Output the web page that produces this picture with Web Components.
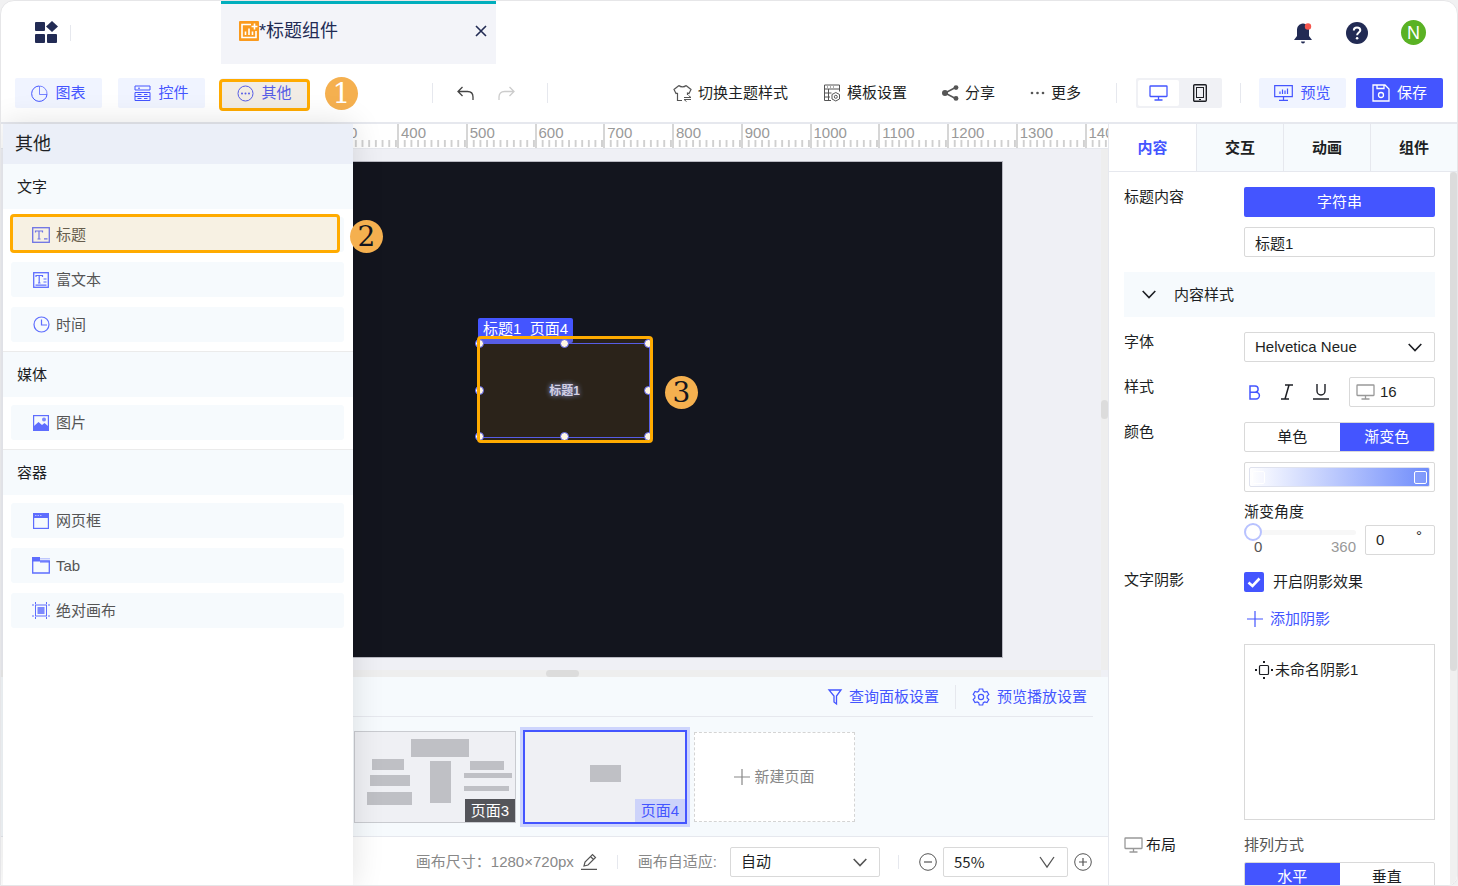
<!DOCTYPE html>
<html lang="zh-CN">
<head>
<meta charset="utf-8">
<meta name="viewport" content="width=device-width, initial-scale=1">
<title>标题组件</title>
<style>
  :root {
    --primary: #4455ff;
    --primary-soft: #f0f4ff;
    --tint: #f6fafd;
    --line: #e6e8ee;
    --field: #d9d9d9;
    --ink: #1d1f24;
    --muted: #888888;
    --mark: #ffab00;
  }
  body {
    margin: 0;
    background: #f1f1f2;
    color: var(--ink);
    font: 15px/20px "Liberation Sans", "Noto Sans CJK SC", sans-serif;
  }
</style>
</head>
<body>
<editor-app></editor-app>

<script>
// width, height, markup; drawn with currentColor
const ICONS = {
  apps: [23, 23, '<g fill="currentColor" stroke="none"><rect y="1" width="10" height="9" rx="1"/><rect y="13" width="10" height="9" rx="1"/><rect x="12" y="13" width="10" height="9" rx="1"/><path d="M17 0l6 5.500-6 5.500-6-5.500z"/></g>'],
  report: [20, 20, '<rect width="20" height="20" rx="1" fill="#fa9a1e" stroke="none"/><path d="M12 3.500H3v13h14V10" stroke="#fff" stroke-width="1.600"/><path d="M6.500 14v-3.500M10 14V7.500M13.500 14v-3.500" stroke="#fff" stroke-width="1.600"/><path d="M15.500 2.500v6M12.500 5.500h6" stroke="#fff" stroke-width="1.600"/>'],
  close: [12, 12, '<path d="M1 1l10 10M11 1L1 11" stroke-width="1.600"/>'],
  bell: [20, 22, '<path d="M10 1.500c-4 .5-6 3-6 6.500v6l-3 4h18l-3-4V8c0-3.500-2-6-6-6.500z" fill="currentColor" stroke="none"/><path d="M8 19.500h4a2 2 0 0 1-4 0z" fill="currentColor" stroke="none"/><circle cx="15" cy="4.500" r="3.200" fill="#f5564e" stroke="none"/>'],
  help: [22, 22, '<circle cx="11" cy="11" r="11" fill="currentColor" stroke="none"/><path d="M7.800 8.600c0-2 1.400-3.200 3.200-3.200s3.300 1.100 3.300 2.900c0 2.200-3.200 2.400-3.200 4.900" stroke="#fff" stroke-width="2"/><circle cx="11.100" cy="16.300" r="1.300" fill="#fff" stroke="none"/>'],
  pie: [17, 17, '<path d="M8 1a7.700 7.700 0 1 0 8 8.500"/><path d="M8.500 1v8.500H16A7.700 7.700 0 0 0 8.500 1z" opacity=".7"/>'],
  widgets: [17, 17, '<path d="M1 5V1h15v4z"/><path d="M1 7.500v8h15v-8zM1 11.500h15"/><path d="M4 3.200h2M3.500 9.500h4M10 9.500h3.500M3.500 13.500h4M10 13.500h3.500"/>'],
  more: [17, 17, '<circle cx="8.500" cy="8.500" r="7.500"/><g fill="currentColor" stroke="none"><circle cx="5" cy="8.500" r="1"/><circle cx="8.500" cy="8.500" r="1"/><circle cx="12" cy="8.500" r="1"/></g>'],
  undo: [17, 15, '<path d="M5.500 1L1 5.500 5.500 10M1 5.500h9.500c3.500 0 5.500 2 5.500 5.500v3" stroke-width="1.300"/>'],
  redo: [17, 15, '<path d="M11.500 1L16 5.500 11.500 10M16 5.500H6.500C3 5.500 1 7.500 1 11v3" stroke-width="1.300"/>'],
  theme: [19, 18, '<path d="M4.500 9v7.500H9M6 1.500L1 5.500l2 4 1.500-.5M13 1.500l5 4-2 4-1.500-.5v2M6 1.500c1.500 1.800 5.500 1.800 7 0" stroke-width="1.200"/><path d="M11 13.500h7l-2.500-2M18 15.500h-7l2.500 2"/>'],
  template: [18, 18, '<path d="M16.500 7.500V1h-15v15.500H8M1.500 5h15M5.500 5v11.500M1.500 9h7M1.500 13H7M4 3h1M7 3h1M10 3h1"/><path d="M12.800 8.500l3.700 2v4.500l-3.700 2-3.800-2v-4.500z"/><circle cx="12.800" cy="12.800" r="1.500"/>'],
  share: [17, 16, '<path d="M13.500 2.500L3 8l10.500 5.500" stroke-width="1.500"/><g fill="currentColor" stroke="none"><circle cx="3" cy="8" r="3"/><circle cx="14" cy="2.600" r="2.400"/><circle cx="14" cy="13.400" r="2.400"/></g>'],
  dots: [15, 16, '<g fill="currentColor" stroke="none"><circle cx="2" cy="8" r="1.300"/><circle cx="7.500" cy="8" r="1.300"/><circle cx="13" cy="8" r="1.300"/></g>'],
  monitor: [19, 16, '<rect x="1" y="1" width="17" height="10.500" rx=".5" stroke-width="1.300"/><path d="M9.500 12v2.500M5.500 15h8" stroke-width="1.300"/>'],
  phone: [14, 18, '<rect x=".7" y=".7" width="12.600" height="16.600" rx="1" stroke-width="1.400"/><rect x="3.500" y="3.500" width="7" height="10"/><path d="M6 15.500h2"/>'],
  preview: [19, 16, '<path d="M18.300.700H.7v11h17.600zM9.500 12v3M5 15.300h9M6 9V6.500M8.500 9V4.500M11 9V5.500M13.500 9V3.500" stroke-width="1.200"/>'],
  save: [18, 18, '<path d="M1 1h12l4 4v12H1zM5 1v3.500h7V1" stroke-width="1.300"/><circle cx="9" cy="11" r="2.500" stroke-width="1.300"/>'],
  title: [18, 16, '<rect x=".7" y=".7" width="16.600" height="14.600" stroke-width="1.300"/><path d="M3.500 5.500V4h7v1.500M7 4v8M5.500 12h3M12 11.800h3.500" stroke-width="1.200"/>'],
  rich: [16, 16, '<rect x=".7" y=".7" width="14.600" height="14.600" stroke-width="1.300"/><path d="M3 5V3.500h6.500V5M6.200 3.500v7.500M5 11h2.500M10.500 7h3M10.500 10h3M2.500 13.200h11" stroke-width="1.200"/>'],
  clock: [17, 17, '<circle cx="8.500" cy="8.500" r="7.500" stroke-width="1.200"/><path d="M8.500 3.500V9H14" stroke-width="1.200"/>'],
  image: [16, 16, '<rect x=".6" y=".6" width="14.800" height="14.800" stroke-width="1.200"/><path d="M1 11l4.500-4 3.500 3 2.500-2 3.500 3v4H1z" fill="currentColor" stroke="none"/><circle cx="11" cy="4.500" r="2" fill="currentColor" stroke="none" opacity=".8"/>'],
  frame: [16, 16, '<rect x=".6" y=".6" width="14.800" height="14.800" stroke-width="1.200"/><path d="M0 0h16v5H0z" fill="currentColor" stroke="none"/><path d="M2 2.500h7" stroke="#aab2ff" stroke-dasharray="1.500 1"/>'],
  tab: [18, 17, '<path d="M.7 1v15h16.600V4H8" stroke-width="1.300"/><path d="M0 0h8v4.500H0zM8 4.500h10v1H8z" fill="currentColor" stroke="none"/><path d="M8 1.800h10" opacity=".5"/>'],
  canvas: [18, 17, '<rect x="3.500" y="3" width="11" height="11"/><rect x="5.500" y="5" width="7" height="7" fill="currentColor" opacity=".8" stroke="none"/><path d="M3.500 0v2M14.500 0v2M3.500 15v2M14.500 15v2M0 3h2M0 14h2M16 3h2M16 14h2"/>'],
  funnel: [14, 16, '<path d="M1 1h12L8.500 7v8L6 13V7z" stroke-width="1.300"/>'],
  gear: [18, 18, '<path d="M7.300 1h3.400l.6 2.300 1.500.8 2.200-.7 1.800 3-1.700 1.700v1.800l1.700 1.700-1.800 3-2.200-.7-1.500.8-.6 2.300H7.300l-.6-2.300-1.500-.8-2.200.7-1.800-3 1.700-1.700V8.100L1.200 6.400l1.800-3 2.200.7 1.500-.8z" stroke-width="1.200"/><circle cx="9" cy="9" r="2.600" stroke-width="1.200"/>'],
  plus: [16, 16, '<path d="M8 0v16M0 8h16" stroke-width="1.200"/>'],
  pencil: [16, 16, '<path d="M3 12l1-4 7.500-7.500 3 3L7 11zM9.500 2.500l3 3M0 15.300h16" stroke-width="1.200"/>'],
  minusCircle: [18, 18, '<circle cx="9" cy="9" r="8.300"/><path d="M5 9h8" stroke-width="1.200"/>'],
  plusCircle: [18, 18, '<circle cx="9" cy="9" r="8.300"/><path d="M5 9h8M9 5v8" stroke-width="1.200"/>'],
  chevron: [14, 9, '<path d="M.700 1L7 7.500 13.300 1" stroke-width="1.600"/>'],
  vee: [16, 12, '<path d="M1 1l7 10 7-10" stroke-width="1.300"/>'],
  bold: [12, 15, '<path d="M1 1h5a3 3 0 0 1 0 6.200H1zM1 7.200h6a3.300 3.300 0 0 1 0 6.800H1z" stroke-width="1.500"/>'],
  italic: [12, 16, '<path d="M4 1h8M0 15h8M8 1L4 15" stroke-width="1.500"/>'],
  underline: [16, 16, '<path d="M4 0v7a4 4 0 0 0 8 0V0M0 15h16" stroke-width="1.400"/>'],
  tick: [14, 11, '<path d="M1.500 5.500l4 3.500 7-7.500" stroke-width="2.600"/>'],
  move: [18, 18, '<rect x="4.500" y="4.500" width="9" height="9" rx="1" stroke-width="1.200"/><g fill="currentColor" stroke="none"><path d="M8 0h2v2H8zM8 16h2v2H8zM0 8h2v2H0zM16 8h2v2h-2z"/></g>']
};

const BASE = `
  * { box-sizing: border-box; }
  button, input, select { font: inherit; color: inherit; margin: 0; }
  button { display: flex; align-items: center; justify-content: center; padding: 0; border: 0; background: none; cursor: pointer; white-space: nowrap; }
  .divider { width: 1px; background: var(--line); }
  .field { height: 30px; border: 1px solid var(--field); border-radius: 2px; background: #fff; }
  .select { display: grid; grid-template-columns: 1fr auto; align-items: center; }
  .select select { grid-area: 1 / 1 / 2 / 3; width: 100%; height: 28px; padding: 0 10px; border: 0; background: none; appearance: none; outline: 0; }
  .select ui-icon { grid-area: 1 / 2; margin-right: 12px; pointer-events: none; }
`;

class UiIcon extends HTMLElement {
  connectedCallback() {
    const [w, h, body] = ICONS[this.getAttribute('name')];
    this.attachShadow({ mode: 'open' }).innerHTML = `
      <style>
        :host { display: inline-flex; flex: none; }
        svg { display: block; overflow: visible; }
      </style>
      <svg width="${w}" height="${h}" viewBox="0 0 ${w} ${h}" fill="none" stroke="currentColor" aria-hidden="true">${body}</svg>
    `;
  }
}
customElements.define('ui-icon', UiIcon);

class StepBadge extends HTMLElement {
  connectedCallback() {
    this.attachShadow({ mode: 'open' }).innerHTML = `
      <style>
        :host {
          display: flex;
          flex: none;
          align-items: center;
          justify-content: center;
          width: 33px;
          height: 33px;
          border-radius: 50%;
          background: #f5b04f;
          color: #13151e;
          font: 28px/33px "DejaVu Serif", serif;
        }
      </style>
      <slot></slot>
    `;
  }
}
customElements.define('step-badge', StepBadge);

class RulerScale extends HTMLElement {
  connectedCallback() {
    const cells = Array.from({ length: 15 }, (_, i) => `<span>${i * 100}</span>`).join('');
    this.attachShadow({ mode: 'open' }).innerHTML = `
      <style>
        :host { display: block; overflow: hidden; height: 25px; padding-left: 121px; background: #fff; border-bottom: 1px solid var(--line); }
        div { display: grid; grid-template-columns: repeat(20, 1fr); width: 1375px; height: 24px; }
        span {
          padding-left: 2px;
          border-left: 2px solid #d6d6d6;
          color: #999;
          font-size: 15px;
          line-height: 18px;
          background: linear-gradient(90deg, transparent 5px, #d0d0d0 5px) 0 16px / 10% 7px repeat-x;
        }
      </style>
      <div>${cells}</div>
    `;
  }
}
customElements.define('ruler-scale', RulerScale);

class AppHeader extends HTMLElement {
  connectedCallback() {
    this.attachShadow({ mode: 'open' }).innerHTML = `
      <style>${BASE}
        :host { display: flex; align-items: center; height: 63px; padding: 0 31px 0 34px; color: #222b54; }
        .divider { height: 16px; margin-left: 12px; }
        .tab {
          display: flex;
          align-items: center;
          align-self: stretch;
          width: 275px;
          margin-left: 150px;
          padding: 0 9px 6px 18px;
          border-top: 3px solid #00aebd;
          background: #f3f4f9;
          font-size: 18px;
        }
        .tab button { margin-left: auto; }
        .right { display: flex; align-items: center; gap: 33px; margin-left: auto; }
        .avatar { width: 25px; height: 25px; border-radius: 50%; background: #5ab224; color: #fff; font-size: 18px; }
      </style>
      <button aria-label="应用"><ui-icon name="apps"></ui-icon></button>
      <span class="divider"></span>
      <div class="tab">
        <ui-icon name="report"></ui-icon><span>*标题组件</span>
        <button aria-label="关闭"><ui-icon name="close"></ui-icon></button>
      </div>
      <div class="right">
        <button aria-label="通知"><ui-icon name="bell"></ui-icon></button>
        <button aria-label="帮助"><ui-icon name="help"></ui-icon></button>
        <button class="avatar">N</button>
      </div>
    `;
  }
}
customElements.define('app-header', AppHeader);

class AppToolbar extends HTMLElement {
  connectedCallback() {
    this.attachShadow({ mode: 'open' }).innerHTML = `
      <style>${BASE}
        :host { display: flex; align-items: center; height: 60px; padding: 0 14px; border-bottom: 2px solid var(--line); }
        .soft { position: relative; gap: 7px; width: 87px; height: 30px; border-radius: 2px; background: var(--primary-soft); color: var(--primary); }
        .solid { background: var(--primary); color: #fff; }
        .add { display: flex; align-items: center; gap: 16px; }
        .mark { position: absolute; inset: 1px -2px -3px -2px; border: 3px solid var(--mark); border-radius: 4px; background: rgba(255, 171, 0, .1); }
        step-badge { margin-left: 1px; color: #fff; }
        .divider { height: 20px; }
        .history { display: flex; align-items: center; gap: 24px; margin-left: 74px; color: #444; }
        .history .redo { margin-right: 8px; color: #ccc; }
        .right { display: flex; align-items: center; margin-left: auto; }
        .links { display: flex; gap: 35px; margin-right: 35px; }
        .links button { gap: 6px; }
        .links ui-icon { color: #555; }
        .device { display: flex; margin: 0 18px 0 19px; padding: 2px; border-radius: 2px; background: #f0f1f5; }
        .device button { width: 41px; height: 26px; border-radius: 2px; }
        .device .on { background: #fff; color: var(--primary); }
        .actions { display: flex; gap: 10px; margin-left: 18px; }
      </style>
      <div class="add">
        <button class="soft"><ui-icon name="pie"></ui-icon>图表</button>
        <button class="soft"><ui-icon name="widgets"></ui-icon>控件</button>
        <button class="soft"><ui-icon name="more"></ui-icon>其他<span class="mark"></span></button>
        <step-badge>1</step-badge>
      </div>
      <div class="history">
        <span class="divider"></span>
        <button aria-label="撤销"><ui-icon name="undo"></ui-icon></button>
        <button class="redo" aria-label="重做"><ui-icon name="redo"></ui-icon></button>
        <span class="divider"></span>
      </div>
      <div class="right">
        <div class="links">
          <button><ui-icon name="theme"></ui-icon>切换主题样式</button>
          <button><ui-icon name="template"></ui-icon>模板设置</button>
          <button><ui-icon name="share"></ui-icon>分享</button>
          <button><ui-icon name="dots"></ui-icon>更多</button>
        </div>
        <span class="divider"></span>
        <div class="device">
          <button class="on" aria-label="电脑"><ui-icon name="monitor"></ui-icon></button>
          <button aria-label="手机"><ui-icon name="phone"></ui-icon></button>
        </div>
        <span class="divider"></span>
        <div class="actions">
          <button class="soft"><ui-icon name="preview"></ui-icon>预览</button>
          <button class="soft solid"><ui-icon name="save"></ui-icon>保存</button>
        </div>
      </div>
    `;
  }
}
customElements.define('app-toolbar', AppToolbar);

const WIDGETS = [
  { title: '文字', items: [['title', '标题'], ['rich', '富文本'], ['clock', '时间']] },
  { title: '媒体', items: [['image', '图片']] },
  { title: '容器', items: [['frame', '网页框'], ['tab', 'Tab'], ['canvas', '绝对画布']] }
];

class WidgetDrawer extends HTMLElement {
  connectedCallback() {
    const item = ([icon, text]) => `
      <button>
        <span class="icon"><ui-icon name="${icon}"></ui-icon></span>${text}
        ${icon === 'title' ? '<span class="mark"></span><step-badge>2</step-badge>' : ''}
      </button>`;
    this.attachShadow({ mode: 'open' }).innerHTML = `
      <style>${BASE}
        :host { display: block; background: #fff; box-shadow: 0 0 30px rgba(0, 0, 0, .12); }
        h2 { margin: 0; padding-left: 12px; background: #ebeff8; font-size: 18px; font-weight: 400; line-height: 40px; }
        h3 { margin: 0; padding-left: 14px; background: var(--tint); font-size: 15px; font-weight: 400; line-height: 45px; }
        section + section { border-top: 1px solid #ebebeb; }
        .items { display: grid; gap: 10px; padding: 8px 9px 9px 8px; }
        .items button { position: relative; justify-content: flex-start; gap: 6px; height: 35px; padding-left: 21px; border-radius: 3px; background: var(--tint); color: #555; }
        .icon { display: flex; justify-content: center; width: 18px; color: var(--primary); opacity: .85; }
        .mark { position: absolute; inset: -3px 4px -1px -1px; border: 3px solid var(--mark); border-radius: 4px; background: rgba(255, 171, 0, .1); }
        step-badge { position: absolute; top: 3px; right: -39px; }
      </style>
      <h2>其他</h2>
      ${WIDGETS.map(group => `
        <section>
          <h3>${group.title}</h3>
          <div class="items">${group.items.map(item).join('')}</div>
        </section>`).join('')}
    `;
  }
}
customElements.define('widget-drawer', WidgetDrawer);

class WorkCanvas extends HTMLElement {
  connectedCallback() {
    const handles = [[0, 0], [50, 0], [100, 0], [0, 50], [100, 50], [0, 100], [50, 100], [100, 100]]
      .map(([x, y]) => `<i style="left:${x}%;top:${y}%"></i>`).join('');
    this.attachShadow({ mode: 'open' }).innerHTML = `
      <style>${BASE}
        :host { display: grid; grid-template: 1fr 7px / 1fr 7px; overflow: hidden; background: #eff0f5; }
        .view { overflow: hidden; padding: 13px 0 0 121px; }
        .stage { position: relative; width: 880px; height: 495px; background: #13151e; box-shadow: 0 0 0 1px #b9b9c2; }
        .vbar, .hbar { display: flex; align-items: center; justify-content: center; background: #eeeeee; }
        .hbar { padding-left: 22px; }
        .vbar::before, .hbar::before { content: ""; border-radius: 4px; background: #dcdcdc; }
        .vbar::before { width: 7px; height: 19px; }
        .hbar::before { width: 33px; height: 7px; }
        .node { position: absolute; left: 357px; top: 181px; display: flex; align-items: center; justify-content: center; width: 171px; height: 95px; border: 1px solid var(--primary); }
        .node b { color: #cdd4ff; font-size: 12px; text-shadow: 0 0 5px #8ba0ff; }
        .tag { position: absolute; left: -2px; bottom: 94px; height: 25px; padding: 0 5px; border-radius: 2px; background: var(--primary); color: #fff; line-height: 22px; white-space: pre; }
        i { position: absolute; width: 9px; height: 9px; margin: -5px; border: 1px solid var(--primary); border-radius: 50%; background: #fff; }
        .mark { position: absolute; inset: -8px -4px -6px -3px; border: 3px solid var(--mark); border-radius: 4px; background: rgba(255, 171, 0, .1); }
        step-badge { position: absolute; left: 543px; top: 214px; }
      </style>
      <div class="view">
        <div class="stage">
          <div class="node">
            <span class="tag">标题1  页面4</span>
            <b>标题1</b>
            ${handles}
            <span class="mark"></span>
          </div>
          <step-badge>3</step-badge>
        </div>
      </div>
      <div class="vbar"></div>
      <div class="hbar"></div>
    `;
  }
}
customElements.define('work-canvas', WorkCanvas);

class PageStrip extends HTMLElement {
  connectedCallback() {
    this.attachShadow({ mode: 'open' }).innerHTML = `
      <style>${BASE}
        :host { display: block; background: var(--tint); border-bottom: 1px solid var(--line); }
        .links { display: flex; align-items: center; justify-content: flex-end; height: 40px; margin: 0 15px; padding-right: 6px; border-bottom: 1px solid var(--line); color: var(--primary); }
        .links button { gap: 7px; }
        .links .divider { height: 24px; margin: 0 16px; }
        .pages { display: flex; align-items: center; gap: 7px; height: 119px; padding: 0 15px; }
        .page { position: relative; flex: none; align-items: flex-start; border: 1px solid #c9cbd0; background: #eff0f4; }
        .page svg { display: block; fill: #bfc0c5; }
        .page span { position: absolute; right: 0; bottom: 0; padding: 0 6px; background: #54555a; color: #fff; line-height: 23px; }
        .page.on { border: 2px solid var(--primary); box-shadow: 0 0 0 3px #ced5fd; }
        .page.on span { background: #cdd3fa; color: var(--primary); }
        .new { flex: none; gap: 4px; width: 161px; height: 90px; border: 1px dashed #d4d4d4; background: #fff; color: var(--muted); }
      </style>
      <div class="links">
        <button><ui-icon name="funnel"></ui-icon>查询面板设置</button>
        <span class="divider"></span>
        <button><ui-icon name="gear"></ui-icon>预览播放设置</button>
      </div>
      <div class="pages">
        <button class="page"><svg width="160" height="90"></svg><span>页面1</span></button>
        <button class="page"><svg width="160" height="90"></svg><span>页面2</span></button>
        <button class="page">
          <svg width="160" height="90" viewBox="0 0 160 90">
            <path d="M56 7h58v18H56zM17 27h32v11H17zM15 43h40v11H15zM12 60h45v13H12zM75 29h21v42H75zM115 29h34v9h-34zM109 41h48v5h-48zM109 54h45v5h-45z"/>
          </svg>
          <span>页面3</span>
        </button>
        <button class="page on">
          <svg width="160" height="90" viewBox="0 0 160 90"><path d="M65 33h31v17H65z"/></svg>
          <span>页面4</span>
        </button>
        <button class="new"><ui-icon name="plus"></ui-icon>新建页面</button>
      </div>
    `;
  }
}
customElements.define('page-strip', PageStrip);

class StatusBar extends HTMLElement {
  connectedCallback() {
    this.attachShadow({ mode: 'open' }).innerHTML = `
      <style>${BASE}
        :host { display: flex; align-items: center; justify-content: flex-end; height: 48px; padding: 2px 16px 0; background: #fff; color: var(--muted); }
        button, .select ui-icon { color: #555; }
        .size { margin-right: 7px; }
        .size + button { margin-right: 2px; }
        .divider { height: 14px; margin: 0 20px 0 18px; }
        label { margin-right: 13px; }
        .fit { width: 150px; color: var(--ink); }
        .zoom { width: 125px; margin: 0 6px; color: var(--ink); font-family: "Noto Sans CJK SC", sans-serif; }
      </style>
      <span class="size">画布尺寸：1280×720px</span>
      <button aria-label="编辑尺寸"><ui-icon name="pencil"></ui-icon></button>
      <span class="divider"></span>
      <label for="fit">画布自适应:</label>
      <div class="field select fit">
        <select id="fit"><option>自动</option></select>
        <ui-icon name="chevron"></ui-icon>
      </div>
      <span class="divider"></span>
      <button aria-label="缩小"><ui-icon name="minusCircle"></ui-icon></button>
      <div class="field select zoom">
        <select aria-label="缩放"><option>55%</option></select>
        <ui-icon name="vee"></ui-icon>
      </div>
      <button aria-label="放大"><ui-icon name="plusCircle"></ui-icon></button>
    `;
  }
}
customElements.define('status-bar', StatusBar);

class PropPanel extends HTMLElement {
  connectedCallback() {
    this.attachShadow({ mode: 'open' }).innerHTML = `
      <style>${BASE}
        :host { display: flex; flex-direction: column; overflow: hidden; background: #fff; border-left: 1px solid var(--line); }
        .tabs { display: grid; grid-template-columns: repeat(4, 1fr); flex: none; height: 48px; border-bottom: 1px solid var(--line); }
        .tabs button { background: var(--tint); font-weight: 700; }
        .tabs button + button { border-left: 1px solid var(--line); }
        .tabs .on { background: #fff; color: var(--primary); }
        .scroll { display: grid; grid-template-columns: 1fr 7px; flex: 1; min-height: 0; overflow: hidden; }
        .bar { background: #f0f0f0; }
        .bar::before { content: ""; display: block; height: 70%; border-radius: 4px; background: #dcdcdc; }
        .form { display: grid; gap: 15px; align-content: start; padding: 15px 15px 0; overflow: hidden; }
        .row { display: grid; grid-template-columns: 120px 1fr; align-items: start; }
        .stack { display: grid; gap: 10px; }
        .type { height: 30px; border-radius: 2px; background: var(--primary); color: #fff; }
        input.field { width: 100%; padding: 0 10px; outline: 0; }
        .section { justify-content: flex-start; gap: 18px; height: 45px; padding-left: 18px; background: var(--tint); }
        .style { display: flex; align-items: center; justify-content: space-between; padding-left: 5px; }
        .style .on { color: var(--primary); }
        .size { display: flex; align-items: center; width: 86px; padding-left: 6px; color: #999; }
        .size input { width: 50px; padding: 0 5px; border: 0; outline: 0; color: var(--ink); }
        .seg { display: grid; grid-template-columns: 1fr 1fr; padding: 0; overflow: hidden; }
        .seg .on { background: var(--primary); color: #fff; }
        .ramp { padding: 4px; }
        .ramp span { display: flex; flex: 1; align-items: center; justify-content: space-between; height: 20px; padding: 0 2px; border: 1px solid #dfe2ee; border-radius: 2px; background: linear-gradient(90deg, #fff, #6f8cfb); }
        .ramp em { width: 13px; height: 13px; border: 1px solid #fff; border-radius: 2px; background: rgba(255, 255, 255, .1); }
        .angle { display: grid; gap: 3px; }
        .angle > div { display: flex; gap: 9px; }
        .slide { flex: 1; }
        .slide div { display: flex; justify-content: space-between; padding-left: 10px; line-height: 16px; color: #999; }
        .slide div span:first-child { color: #555; }
        input[type=range] { display: block; width: 100%; height: 14px; appearance: none; background: none; }
        input[type=range]::-webkit-slider-runnable-track { height: 5px; border-radius: 3px; background: #f7f7f7; }
        input[type=range]::-webkit-slider-thumb { appearance: none; box-sizing: border-box; width: 18px; height: 18px; margin-top: -7px; border: 2px solid #b8c2ff; border-radius: 50%; background: #fff; }
        .deg { display: flex; width: 70px; padding: 0 9px 0 0; }
        .deg input { width: 50px; padding: 0 10px; border: 0; outline: 0; background: none; }
        .check { display: grid; grid-template-columns: 20px auto; gap: 9px; align-items: center; justify-content: start; height: 24px; }
        .check input { grid-area: 1 / 1; width: 20px; height: 20px; appearance: none; border-radius: 2px; background: var(--primary); }
        .check ui-icon { grid-area: 1 / 1; justify-self: center; color: #fff; pointer-events: none; }
        .shadow { display: grid; gap: 15px; }
        .add { justify-self: start; gap: 7px; height: 20px; padding-left: 3px; color: var(--primary); }
        .list { height: 176px; padding: 15px 10px; border: 1px solid var(--field); }
        .list button { gap: 2px; }
        .caption { display: flex; align-items: center; gap: 3px; }
        .caption ui-icon { color: #999; }
        .arrange { display: grid; gap: 7px; color: #555; }
        .arrange button { color: var(--ink); }
        .arrange .on { color: #fff; }
      </style>
      <div class="tabs">
        <button class="on">内容</button><button>交互</button><button>动画</button><button>组件</button>
      </div>
      <div class="scroll">
        <div class="form">
          <div class="row">
            <label for="text">标题内容</label>
            <div class="stack">
              <button class="type">字符串</button>
              <input id="text" class="field" value="标题1">
            </div>
          </div>
          <button class="section"><ui-icon name="chevron"></ui-icon>内容样式</button>
          <div class="row">
            <label for="font">字体</label>
            <div class="field select">
              <select id="font"><option>Helvetica Neue</option></select>
              <ui-icon name="chevron"></ui-icon>
            </div>
          </div>
          <div class="row">
            <label for="size">样式</label>
            <div class="style">
              <button class="on" aria-label="粗体"><ui-icon name="bold"></ui-icon></button>
              <button aria-label="斜体"><ui-icon name="italic"></ui-icon></button>
              <button aria-label="下划线"><ui-icon name="underline"></ui-icon></button>
              <div class="field size"><ui-icon name="monitor"></ui-icon><input id="size" value="16"></div>
            </div>
          </div>
          <div class="row">
            <span>颜色</span>
            <div class="stack">
              <div class="field seg"><button>单色</button><button class="on">渐变色</button></div>
              <button class="field ramp" aria-label="渐变"><span><em></em><em></em></span></button>
              <div class="angle">
                <label for="angle">渐变角度</label>
                <div>
                  <div class="slide">
                    <input id="angle" type="range" min="0" max="360" value="0">
                    <div><span>0</span><span>360</span></div>
                  </div>
                  <div class="field deg"><input aria-label="角度" value="0"><span>°</span></div>
                </div>
              </div>
            </div>
          </div>
          <div class="row">
            <span>文字阴影</span>
            <div class="shadow">
              <label class="check"><input type="checkbox" checked><ui-icon name="tick"></ui-icon>开启阴影效果</label>
              <button class="add"><ui-icon name="plus"></ui-icon>添加阴影</button>
              <div class="list"><button><ui-icon name="move"></ui-icon>未命名阴影1</button></div>
            </div>
          </div>
          <div class="row">
            <span class="caption"><ui-icon name="monitor"></ui-icon>布局</span>
            <div class="arrange">
              <span>排列方式</span>
              <div class="field seg"><button class="on">水平</button><button>垂直</button></div>
            </div>
          </div>
        </div>
        <div class="bar"></div>
      </div>
    `;
  }
}
customElements.define('prop-panel', PropPanel);

class EditorApp extends HTMLElement {
  connectedCallback() {
    this.attachShadow({ mode: 'open' }).innerHTML = `
      <style>${BASE}
        :host {
          display: flex;
          flex-direction: column;
          box-sizing: border-box;
          height: 100vh;
          overflow: hidden;
          border: 1px solid #e6e6e8;
          border-radius: 14px 14px 10px 0;
          background: #fff;
        }
        main { position: relative; display: grid; grid-template-columns: 1fr 349px; flex: 1; min-height: 0; }
        .work { display: flex; flex-direction: column; min-width: 0; }
        work-canvas { flex: 1; min-height: 0; }
        widget-drawer { position: absolute; left: 2px; top: 0; bottom: -1px; width: 350px; }
      </style>
      <app-header></app-header>
      <app-toolbar></app-toolbar>
      <main>
        <div class="work">
          <ruler-scale></ruler-scale>
          <work-canvas></work-canvas>
          <page-strip></page-strip>
          <status-bar></status-bar>
        </div>
        <prop-panel></prop-panel>
        <widget-drawer></widget-drawer>
      </main>
    `;
  }
}
customElements.define('editor-app', EditorApp);
</script>
</body>
</html>
